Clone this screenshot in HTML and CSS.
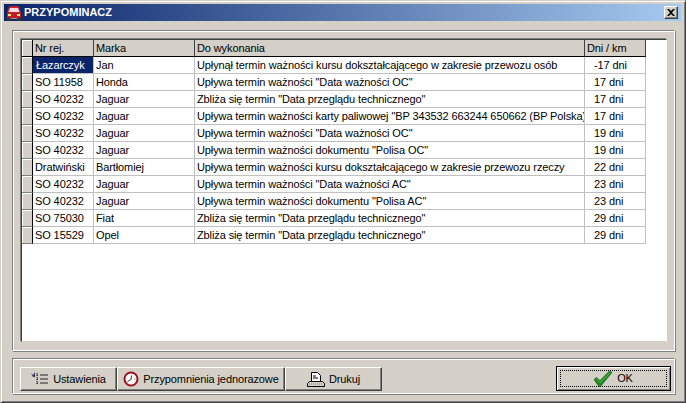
FILE: index.html
```html
<!DOCTYPE html>
<html lang="pl">
<head>
<meta charset="utf-8">
<title>Przypominacz</title>
<link rel="stylesheet" href="styles.css">
</head>
<body>
<div class="window">
  <div class="titlebar">
    <svg class="appicon" width="16" height="16" viewBox="0 0 16 16"><path d="M1 8 L3 2 Q3.500 1 5 1 H11 Q12.500 1 13 2 L15 8 V13 H1Z" fill="#c8202a"/><path d="M4 3 H12 L13.500 7 H2.500Z" fill="#f4dcdc"/><rect x="1" y="8" width="14" height="5" fill="#c01c28"/><rect x="2" y="9" width="3" height="2" fill="#f4e070"/><rect x="11" y="9" width="3" height="2" fill="#f4e070"/><rect x="1" y="13" width="4" height="3" fill="#333"/><rect x="11" y="13" width="4" height="3" fill="#333"/><rect x="5" y="13" width="6" height="1" fill="#999"/></svg>
    <span class="title">PRZYPOMINACZ</span>
    <button class="close" aria-label="Zamknij"><svg width="8" height="7" viewBox="0 0 8 7"><path d="M0 0h2l2 2 2-2h2L5 3.500 8 7H6L4 5 2 7H0l3-3.500z" fill="#000"/></svg></button>
  </div>
  <div class="body">
    <div class="panel top">
      <div class="grid">
        <div class="row head">
          <div class="ind"></div><div class="c c1">Nr rej.</div><div class="c c2">Marka</div><div class="c c3">Do wykonania</div><div class="c c4">Dni / km</div>
        </div>
        <div class="row"><div class="ind"></div><div class="c c1 sel">Łazarczyk</div><div class="c c2">Jan</div><div class="c c3">Upłynął termin ważności kursu dokształcającego w zakresie przewozu osób</div><div class="c c4">-17 dni</div></div>
        <div class="row"><div class="ind"></div><div class="c c1">SO 11958</div><div class="c c2">Honda</div><div class="c c3">Upływa termin ważności "Data ważności OC"</div><div class="c c4">17 dni</div></div>
        <div class="row"><div class="ind"></div><div class="c c1">SO 40232</div><div class="c c2">Jaguar</div><div class="c c3">Zbliża się termin "Data przeglądu technicznego"</div><div class="c c4">17 dni</div></div>
        <div class="row"><div class="ind"></div><div class="c c1">SO 40232</div><div class="c c2">Jaguar</div><div class="c c3">Upływa termin ważności karty paliwowej "BP 343532 663244 650662 (BP Polska)</div><div class="c c4">17 dni</div></div>
        <div class="row"><div class="ind"></div><div class="c c1">SO 40232</div><div class="c c2">Jaguar</div><div class="c c3">Upływa termin ważności "Data ważności OC"</div><div class="c c4">19 dni</div></div>
        <div class="row"><div class="ind"></div><div class="c c1">SO 40232</div><div class="c c2">Jaguar</div><div class="c c3">Upływa termin ważności dokumentu "Polisa OC"</div><div class="c c4">19 dni</div></div>
        <div class="row"><div class="ind"></div><div class="c c1">Dratwiński</div><div class="c c2">Bartłomiej</div><div class="c c3">Upływa termin ważności kursu dokształcającego w zakresie przewozu rzeczy</div><div class="c c4">22 dni</div></div>
        <div class="row"><div class="ind"></div><div class="c c1">SO 40232</div><div class="c c2">Jaguar</div><div class="c c3">Upływa termin ważności "Data ważności AC"</div><div class="c c4">23 dni</div></div>
        <div class="row"><div class="ind"></div><div class="c c1">SO 40232</div><div class="c c2">Jaguar</div><div class="c c3">Upływa termin ważności dokumentu "Polisa AC"</div><div class="c c4">23 dni</div></div>
        <div class="row"><div class="ind"></div><div class="c c1">SO 75030</div><div class="c c2">Fiat</div><div class="c c3">Zbliża się termin "Data przeglądu technicznego"</div><div class="c c4">29 dni</div></div>
        <div class="row"><div class="ind"></div><div class="c c1">SO 15529</div><div class="c c2">Opel</div><div class="c c3">Zbliża się termin "Data przeglądu technicznego"</div><div class="c c4">29 dni</div></div>
      </div>
    </div>
    <div class="panel bottom">
      <div class="btngroup">
        <button class="btn b1"><svg width="18" height="14" viewBox="0 0 18 14"><path d="M0 1l2 2 2-3v5H2z" fill="#33336a"/><path d="M6 1v12M6 3h2M6 7h2M6 11h2" stroke="#000" stroke-dasharray="1 1" fill="none"/><path d="M9 3h8M9 7h8M9 11h8" stroke="#222" fill="none"/></svg>Ustawienia</button>
        <button class="btn b2"><svg width="16" height="16" viewBox="0 0 16 16"><circle cx="8" cy="8" r="6.500" fill="#fff" stroke="#a01020" stroke-width="2"/><path d="M8.500 4.500L8 8.500 4.500 10.500" stroke="#333" fill="none"/><path d="M11 8h1.500" stroke="#888"/></svg>Przypomnienia jednorazowe</button>
        <button class="btn b3"><svg width="18" height="15" viewBox="0 0 18 15"><path d="M4.500 .5h6l3 3v6h-9z" fill="#fff" stroke="#000"/><path d="M6 4h3M6 6h5" stroke="#000"/><path d="M2.500 9.500h13l2 2v3H.5v-3z" fill="#d4d0c8" stroke="#000"/><path d="M2 12h14" stroke="#777" stroke-dasharray="1 1"/></svg>Drukuj</button>
      </div>
      <button class="btn ok"><span class="focus"><svg width="18" height="16" viewBox="0 0 18 16"><path d="M0 8.500l2.500-2 3.500 3L15.500 0 18 1.500 6.500 15.500H5z" fill="#1f8a25" stroke="#0c5012" stroke-width=".6"/><path d="M3 8l3 3.500L16 2" stroke="#4fc040" fill="none"/></svg>OK</span></button>
    </div>
  </div>
</div>
</body>
</html>
```

FILE: styles.css
```css
* { box-sizing: border-box; }
html, body { margin: 0; padding: 0; }
body { width: 686px; height: 403px; overflow: hidden; font: 11px/13px "Liberation Sans", Arial, sans-serif; letter-spacing: -0.11px; color: #000; background: #d4d0c8; }
.window { width: 686px; height: 403px; padding: 4px; display: flex; flex-direction: column; border: 1px solid #d4d0c8; border-right-color: #404040; border-bottom-color: #404040; box-shadow: inset 1px 1px 0 #fff, inset -1px -1px 0 #808080; }
.titlebar { height: 17px; margin: -1px 0 0 -1px; flex: none; display: flex; align-items: center; padding: 0 3px 0 2px; background: linear-gradient(90deg, #0a246a, #a6caf0); }
.appicon { flex: none; }
.title { margin-left: 2px; color: #fff; font: bold 11px/13px "Liberation Sans", Arial, sans-serif; letter-spacing: 0; }
.close { margin-left: auto; width: 14px; height: 13px; padding: 0; display: flex; align-items: center; justify-content: center; background: #d4d0c8; border: 1px solid; border-color: #fff #404040 #404040 #fff; box-shadow: inset -1px -1px 0 #808080; }
.body { flex: 1; display: flex; flex-direction: column; padding: 9px 6px 0 7px; gap: 7px; }
.panel { border: 1px solid #808080; border-right-color: #fff; border-bottom-color: #fff; box-shadow: inset 1px 1px 0 #fff, 1px 1px 0 #808080; }
.top { height: 321px; flex: none; padding: 8px 7px 8px 8px; }
.grid { height: 303px; background: #fff; border: 1px solid #404040; border-right-color: #fff; border-bottom-color: #d4d0c8; box-shadow: -1px -1px 0 #808080; display: flex; flex-direction: column; }
.row { display: flex; height: 17px; flex: none; }
.ind { width: 11px; flex: none; background: #d4d0c8; border-right: 1px solid #000; border-bottom: 1px solid #808080; box-shadow: inset 1px 1px 0 #fff; }
.c { flex: none; height: 17px; padding: 2px 2px 1px; white-space: nowrap; overflow: hidden; border-right: 1px solid #c0c0c0; border-bottom: 1px solid #c0c0c0; }
.c1 { width: 61px; } .c2 { width: 101px; } .c3 { width: 390px; } .c4 { width: 61px; padding-left: 9px; }
.sel { background: #0a246a; color: #fff; padding-left: 3px; }
.head .c { background: #d4d0c8; border-right-color: #404040; border-bottom-color: #000; }
.head .ind { border-bottom-color: #000; }
.head .c4 { padding-left: 2px; }
.bottom { flex: 1; margin-bottom: 4px; padding: 7px 3px 0 7px; display: flex; justify-content: space-between; align-items: flex-start; }
.btngroup { display: flex; margin-top: 1px; }
.btn { font: inherit; letter-spacing: inherit; color: #000; height: 24px; padding: 0; display: flex; align-items: center; justify-content: center; gap: 4px; background: #d4d0c8; border: 1px solid; border-color: #fff #404040 #404040 #fff; box-shadow: inset -1px -1px 0 #808080; }
.b1 { width: 97px; } .b2 { width: 168px; } .b3 { width: 97px; }
.ok { width: 115px; height: 25px; border: 1px solid #000; box-shadow: inset 1px 1px 0 #fff, inset -1px -1px 0 #808080; padding: 3px; }
.focus { flex: 1; height: 100%; display: flex; align-items: center; justify-content: center; gap: 5px; border: 1px dotted #000; }
```
